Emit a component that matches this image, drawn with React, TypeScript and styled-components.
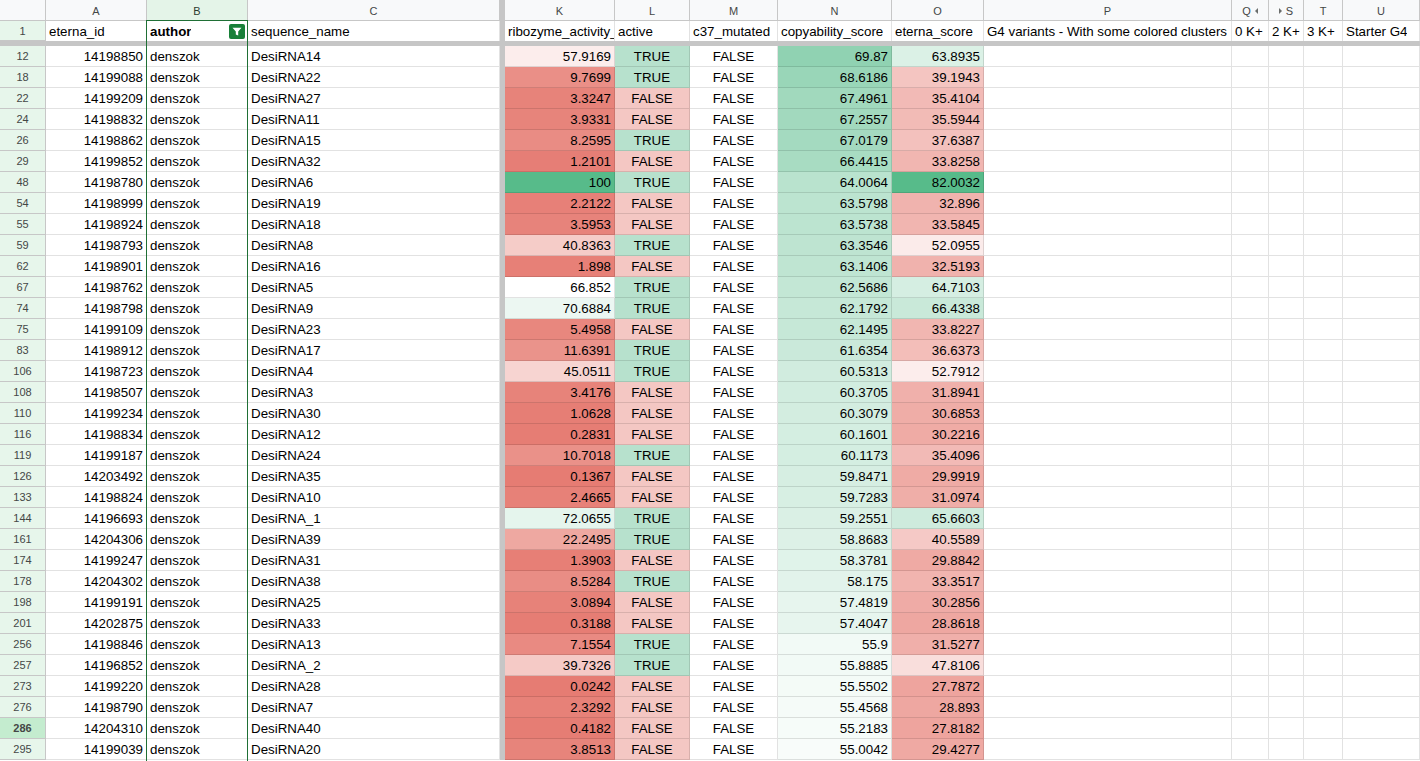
import React from 'react'
import styled, { createGlobalStyle, css } from 'styled-components'

const GlobalStyle = createGlobalStyle`
  html, body {
    margin: 0;
    padding: 0;
    background: #ffffff;
    overflow: hidden;
  }
  body {
    font-family: "Liberation Sans", Arial, sans-serif;
  }
`

const COLS = '46px 101px 101px 252px 5px 110px 75px 88px 114px 92px 248px 37px 35px 39px 1fr'
const GRID = 'rgba(0, 0, 0, 0.115)'
const HEAD_LINE = '#c7c7c7'
const FREEZE = '#c6c6c6'

const Sheet = styled.div`
  position: relative;
  width: 1420px;
  height: 761px;
  overflow: hidden;
  display: flex;
  flex-direction: column;
  background: #ffffff;
`

const Row = styled.div<{ $height: number }>`
  display: grid;
  grid-template-columns: ${COLS};
  height: ${(p) => p.$height}px;
  flex: none;
`

const FreezeBar = styled.div`
  height: 5px;
  flex: none;
  background: ${FREEZE};
`

const FreezeCol = styled.div`
  background: ${FREEZE};
`

const ColHead = styled.div<{ $selected?: boolean }>`
  box-sizing: border-box;
  display: flex;
  align-items: center;
  justify-content: center;
  gap: 4px;
  border-right: 1px solid ${HEAD_LINE};
  border-bottom: 1px solid ${HEAD_LINE};
  background: ${(p) => (p.$selected ? '#e4f4e8' : '#f8f9fa')};
  color: ${(p) => (p.$selected ? '#2d3b30' : '#444746')};
  font-size: 11px;
  padding-top: 1px;
`

const Tri = styled.span<{ $dir: 'left' | 'right' }>`
  width: 0;
  height: 0;
  border-top: 3.5px solid transparent;
  border-bottom: 3.5px solid transparent;
  ${(p) =>
    p.$dir === 'left'
      ? css`border-right: 3.5px solid #6b6e6c;`
      : css`border-left: 3.5px solid #6b6e6c;`}
`

const RowHead = styled.div<{ $active?: boolean }>`
  box-sizing: border-box;
  display: flex;
  align-items: center;
  justify-content: center;
  border-right: 1px solid ${HEAD_LINE};
  border-bottom: 1px solid ${HEAD_LINE};
  background: ${(p) => (p.$active ? '#c4eccf' : '#e7f6eb')};
  color: #444746;
  font-size: 11px;
  font-weight: ${(p) => (p.$active ? 700 : 400)};
`

const Cell = styled.div<{ $align?: 'left' | 'right' | 'center'; $bg?: string; $bold?: boolean; $last?: boolean }>`
  box-sizing: border-box;
  display: flex;
  align-items: center;
  justify-content: ${(p) => (p.$align === 'right' ? 'flex-end' : p.$align === 'center' ? 'center' : 'flex-start')};
  padding: 1px 3px 0 3px;
  border-right: 1px solid ${GRID};
  border-bottom: ${(p) => (p.$last ? 'none' : `1px solid ${GRID}`)};
  background: ${(p) => p.$bg || '#ffffff'};
  color: #000000;
  font-size: 13.33px;
  font-weight: ${(p) => (p.$bold ? 700 : 400)};
  white-space: nowrap;
  overflow: hidden;
`

const TitleCell = styled(Cell)`
  padding-right: 0;
`

const CellText = styled.span`
  overflow: hidden;
`

const FilterCell = styled(Cell)`
  justify-content: space-between;
  padding-right: 2px;
`

const FilterButton = styled.span`
  display: inline-flex;
  width: 16px;
  height: 15px;
`

const Selection = styled.div`
  position: absolute;
  left: 146px;
  top: 20px;
  width: 102px;
  bottom: -2px;
  box-sizing: border-box;
  border: 1px solid #1f6f35;
  pointer-events: none;
`

type Rgb = [number, number, number]
const RED: Rgb = [230, 124, 115]
const GREEN: Rgb = [87, 187, 138]
const WHITE: Rgb = [255, 255, 255]

const mix = (a: Rgb, b: Rgb, t: number) => {
  const k = Math.max(0, Math.min(1, t))
  const c = a.map((v, i) => Math.round(v + (b[i] - v) * k))
  return `rgb(${c[0]}, ${c[1]}, ${c[2]})`
}

const scale3 = (v: number, min: number, mid: number, max: number) =>
  v < mid ? mix(WHITE, RED, (mid - v) / (mid - min)) : mix(WHITE, GREEN, (v - mid) / (max - mid))

const scale2 = (v: number, min: number, max: number) => mix(WHITE, GREEN, (v - min) / (max - min))

type Entry = [string, string, string, string, boolean, string, string]

const rows: Entry[] = [
  ['12', '14198850', 'DesiRNA14', '57.9169', true, '69.87', '63.8935'],
  ['18', '14199088', 'DesiRNA22', '9.7699', true, '68.6186', '39.1943'],
  ['22', '14199209', 'DesiRNA27', '3.3247', false, '67.4961', '35.4104'],
  ['24', '14198832', 'DesiRNA11', '3.9331', false, '67.2557', '35.5944'],
  ['26', '14198862', 'DesiRNA15', '8.2595', true, '67.0179', '37.6387'],
  ['29', '14199852', 'DesiRNA32', '1.2101', false, '66.4415', '33.8258'],
  ['48', '14198780', 'DesiRNA6', '100', true, '64.0064', '82.0032'],
  ['54', '14198999', 'DesiRNA19', '2.2122', false, '63.5798', '32.896'],
  ['55', '14198924', 'DesiRNA18', '3.5953', false, '63.5738', '33.5845'],
  ['59', '14198793', 'DesiRNA8', '40.8363', true, '63.3546', '52.0955'],
  ['62', '14198901', 'DesiRNA16', '1.898', false, '63.1406', '32.5193'],
  ['67', '14198762', 'DesiRNA5', '66.852', true, '62.5686', '64.7103'],
  ['74', '14198798', 'DesiRNA9', '70.6884', true, '62.1792', '66.4338'],
  ['75', '14199109', 'DesiRNA23', '5.4958', false, '62.1495', '33.8227'],
  ['83', '14198912', 'DesiRNA17', '11.6391', true, '61.6354', '36.6373'],
  ['106', '14198723', 'DesiRNA4', '45.0511', true, '60.5313', '52.7912'],
  ['108', '14198507', 'DesiRNA3', '3.4176', false, '60.3705', '31.8941'],
  ['110', '14199234', 'DesiRNA30', '1.0628', false, '60.3079', '30.6853'],
  ['116', '14198834', 'DesiRNA12', '0.2831', false, '60.1601', '30.2216'],
  ['119', '14199187', 'DesiRNA24', '10.7018', true, '60.1173', '35.4096'],
  ['126', '14203492', 'DesiRNA35', '0.1367', false, '59.8471', '29.9919'],
  ['133', '14198824', 'DesiRNA10', '2.4665', false, '59.7283', '31.0974'],
  ['144', '14196693', 'DesiRNA_1', '72.0655', true, '59.2551', '65.6603'],
  ['161', '14204306', 'DesiRNA39', '22.2495', true, '58.8683', '40.5589'],
  ['174', '14199247', 'DesiRNA31', '1.3903', false, '58.3781', '29.8842'],
  ['178', '14204302', 'DesiRNA38', '8.5284', true, '58.175', '33.3517'],
  ['198', '14199191', 'DesiRNA25', '3.0894', false, '57.4819', '30.2856'],
  ['201', '14202875', 'DesiRNA33', '0.3188', false, '57.4047', '28.8618'],
  ['256', '14198846', 'DesiRNA13', '7.1554', true, '55.9', '31.5277'],
  ['257', '14196852', 'DesiRNA_2', '39.7326', true, '55.8885', '47.8106'],
  ['273', '14199220', 'DesiRNA28', '0.0242', false, '55.5502', '27.7872'],
  ['276', '14198790', 'DesiRNA7', '2.3292', false, '55.4568', '28.893'],
  ['286', '14204310', 'DesiRNA40', '0.4182', false, '55.2183', '27.8182'],
  ['295', '14199039', 'DesiRNA20', '3.8513', false, '55.0042', '29.4277'],
]

const letters = ['A', 'B', 'C', '', 'K', 'L', 'M', 'N', 'O', 'P', 'Q', 'S', 'T', 'U']

const headers = [
  'eterna_id',
  'author',
  'sequence_name',
  '',
  'ribozyme_activity_',
  'active',
  'c37_mutated',
  'copyability_score',
  'eterna_score',
  'G4 variants - With some colored clusters',
  '0 K+',
  '2 K+',
  '3 K+',
  'Starter G4',
]

const FilterIcon = () => (
  <FilterButton>
    <svg width="16" height="15" viewBox="0 0 16 15">
      <rect x="0" y="0" width="16" height="15" rx="2" fill="#188038" />
      <path d="M3.5 3.8h9L9.2 7.6v3.9L6.8 10.4V7.6z" fill="#ffffff" />
    </svg>
  </FilterButton>
)

const LetterRow = () => (
  <Row $height={21}>
    <ColHead />
    {letters.map((l, i) =>
      l === '' ? (
        <FreezeCol key={i} />
      ) : (
        <ColHead key={i} $selected={l === 'B'}>
          {l === 'S' && <Tri $dir="right" />}
          {l}
          {l === 'Q' && <Tri $dir="left" />}
        </ColHead>
      ),
    )}
  </Row>
)

const TitleRow = () => (
  <Row $height={20}>
    <RowHead>1</RowHead>
    {headers.map((h, i) => {
      if (i === 3) return <FreezeCol key={i} />
      if (i === 1)
        return (
          <FilterCell key={i} $bold $last>
            <CellText>{h}</CellText>
            <FilterIcon />
          </FilterCell>
        )
      return (
        <TitleCell key={i} $last>
          <CellText>{h}</CellText>
        </TitleCell>
      )
    })}
  </Row>
)

const DataRow = ({ entry }: { entry: Entry }) => {
  const [num, id, name, ribo, active, copy, eterna] = entry
  return (
    <Row $height={21}>
      <RowHead $active={num === '286'}>{num}</RowHead>
      <Cell $align="right">{id}</Cell>
      <Cell>denszok</Cell>
      <Cell>{name}</Cell>
      <FreezeCol />
      <Cell $align="right" $bg={scale3(parseFloat(ribo), 0, 67, 100)}>{ribo}</Cell>
      <Cell $align="center" $bg={active ? '#b7e1cd' : '#f4c7c3'}>{active ? 'TRUE' : 'FALSE'}</Cell>
      <Cell $align="center">FALSE</Cell>
      <Cell $align="right" $bg={scale2(parseFloat(copy), 54, 78)}>{copy}</Cell>
      <Cell $align="right" $bg={scale3(parseFloat(eterna), 14, 59, 82)}>{eterna}</Cell>
      <Cell />
      <Cell />
      <Cell />
      <Cell />
      <Cell />
    </Row>
  )
}

export default function App() {
  return (
    <>
      <GlobalStyle />
      <Sheet>
        <LetterRow />
        <TitleRow />
        <FreezeBar />
        {rows.map((r) => (
          <DataRow key={r[0]} entry={r} />
        ))}
        <Selection />
      </Sheet>
    </>
  )
}
